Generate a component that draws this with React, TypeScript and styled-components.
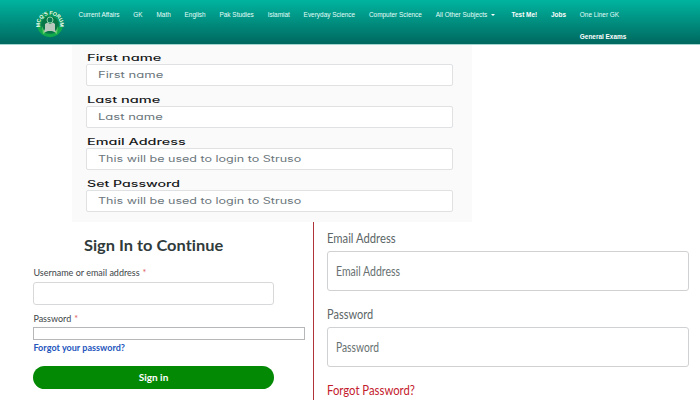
import React from "react";
import styled, { createGlobalStyle, css } from "styled-components";

const GlobalStyle = createGlobalStyle`
  *, *::before, *::after { box-sizing: border-box; }
  body { margin: 0; background: #fff; overflow: hidden; font-variant-ligatures: none; }
`;

const Page = styled.div`
  width: 700px;
  height: 400px;
  overflow: hidden;
  background: #fff;
`;

const Header = styled.header`
  display: flex;
  align-items: flex-start;
  height: 45px;
  padding-left: 35px;
  background: linear-gradient(#00b49f, #00685f);
  border-bottom: 1px solid #a5d5d1;
  font-family: "Liberation Sans", Arial, sans-serif;
`;

const Logo = styled.svg`
  width: 30px;
  height: 30px;
  margin-top: 9px;
  flex: none;
`;

const Nav = styled.nav`
  display: flex;
  margin: 10px 0 0 13.5px;
  gap: 13.8px;
`;

const NavLink = styled.a<{ $bold?: boolean }>`
  display: flex;
  align-items: center;
  height: 9px;
  color: #e6fffb;
  font-size: 6.45px;
  line-height: 9px;
  white-space: nowrap;
  ${(p) =>
    p.$bold &&
    css`
      color: #fff;
      font-weight: 700;
    `}
`;

const Caret = styled.span`
  margin: 1px 3px 0 3.5px;
  border: 2px solid transparent;
  border-top-color: #fff;
  border-bottom: 0;
`;

const NavStack = styled.div`
  display: flex;
  flex-direction: column;
  gap: 13px;
`;

const Stretch = styled.span<{ $x: number }>`
  display: inline-block;
  white-space: nowrap;
  transform: scaleX(${(p) => p.$x});
  transform-origin: 0 50%;
`;

const SignUp = styled.section`
  display: flex;
  flex-direction: column;
  width: 400px;
  height: 177px;
  margin-left: 71.5px;
  padding: 7.3px 19px 0 14.5px;
  background: #fafafa;
  font-family: Inter, sans-serif;
  font-feature-settings: "cv11";
`;

const WideGroup = styled.div`
  height: 41.75px;
`;

const WideLabel = styled.label`
  display: block;
  height: 12px;
  padding-left: 0.5px;
  color: #17191b;
  font-size: 8.7px;
  font-weight: 500;
  line-height: 13px;
`;

const WideInput = styled.div`
  display: flex;
  align-items: center;
  height: 22px;
  padding: 0 10.5px;
  background: #fff;
  border: 1px solid #dfe1e3;
  border-radius: 2px;
  color: #6b767c;
  font-size: 8.3px;
`;

const Lower = styled.main`
  display: flex;
  height: 178px;
  font-family: Lato, sans-serif;
`;

const SignIn = styled.section`
  display: flex;
  flex-direction: column;
  width: 313px;
  padding: 13px 8px 0 33.4px;
`;

const Title = styled.h1`
  margin: 0 0 12px 50.5px;
  height: 20px;
  color: #303b3b;
  font-size: 15px;
  font-weight: 700;
  line-height: 20px;
`;

const Label = styled.label<{ $gap: number }>`
  height: 12px;
  margin-bottom: ${(p) => p.$gap}px;
  color: #3c4548;
  font-size: 9px;
  line-height: 12px;
`;

const Required = styled.span`
  margin-left: 3px;
  color: #e0565b;
`;

const UserInput = styled.div`
  width: 240.3px;
  height: 23px;
  margin-bottom: 8.4px;
  border: 1px solid #d6d8da;
  border-radius: 3px;
`;

const PasswordInput = styled.div`
  width: 271.5px;
  height: 13px;
  margin-bottom: 2px;
  border: 1px solid #b5b7b8;
`;

const ForgotLink = styled.a`
  height: 12px;
  margin-bottom: 11.5px;
  color: #2455bd;
  font-size: 9px;
  font-weight: 700;
  letter-spacing: 0.04px;
  line-height: 12px;
`;

const Submit = styled.button`
  width: 240.3px;
  height: 23px;
  padding: 0;
  border: 0;
  border-radius: 12px;
  background: #048904;
  color: #fff;
  font: 700 10px/23px Lato, sans-serif;
`;

const LogIn = styled.section`
  display: flex;
  flex-direction: column;
  flex: 1;
  padding: 8px 11px 0 13px;
  border-left: 1px solid #b0323a;
`;

const TallLabel = styled.label`
  height: 18px;
  margin-bottom: 3px;
  color: #5c6667;
  font-size: 13px;
  line-height: 17px;
`;

const TallInput = styled.div`
  display: flex;
  align-items: center;
  height: 40px;
  margin-bottom: 14.5px;
  padding: 1px 7.5px 0;
  border: 1px solid #cfd1d2;
  border-radius: 3px;
  color: #687172;
  font-size: 12.5px;
`;

const RedLink = styled.a`
  color: #c4202c;
  font-size: 13px;
  line-height: 18px;
`;

const links = [
  "Current Affairs",
  "GK",
  "Math",
  "English",
  "Pak Studies",
  "Islamiat",
  "Everyday Science",
  "Computer Science",
];

const signUpFields = [
  { label: "First name", labelX: 1.69, hint: "First name", hintX: 1.57 },
  { label: "Last name", labelX: 1.68, hint: "Last name", hintX: 1.57 },
  { label: "Email Address", labelX: 1.66, hint: "This will be used to login to Struso", hintX: 1.51 },
  { label: "Set Password", labelX: 1.63, hint: "This will be used to login to Struso", hintX: 1.51 },
];

const logInFields = [
  { name: "Email Address", labelX: 0.865, hintX: 0.84 },
  { name: "Password", labelX: 0.845, hintX: 0.82 },
];

function ForumLogo() {
  return (
    <Logo viewBox="0 0 30 30">
      <defs>
        <path id="ring" d="M5.2 18.2 A10.1 10.1 0 1 1 24.8 18.2" />
      </defs>
      <circle cx="15" cy="15" r="13" fill="#08965a" />
      <path d="M2.3 18 A13 13 0 0 0 27.7 18 L23 17 A8 8 0 0 1 7 17Z" fill="#12a84c" />
      <circle cx="15" cy="16" r="8.8" fill="#087748" />
      <path d="M10 15 L12.5 13.5 L15 15 L18 13.5 L20 15 L20 21 L22 24 L17 22 L13 22 L8 24 L10 20Z" fill="#b9c9bd" />
      <path d="M7 17 L10 24 L8 25Z M23 17 L20 24 L22 25Z" fill="#63cf68" />
      <circle cx="15" cy="11" r="3" fill="#0b7952" stroke="#8bd0a4" strokeWidth="1" />
      <text fill="#f1fff5" fontFamily="Liberation Sans" fontSize="5.3" fontWeight="700">
        <textPath href="#ring" textLength="36">MCQ'S FORUM</textPath>
      </text>
    </Logo>
  );
}

export default function App() {
  return (
    <Page>
      <GlobalStyle />
      <Header>
        <ForumLogo />
        <Nav>
          {links.map((l) => (
            <NavLink key={l}>{l}</NavLink>
          ))}
          <NavLink>
            All Other Subjects
            <Caret />
          </NavLink>
          <NavLink $bold>Test Me!</NavLink>
          <NavLink $bold>Jobs</NavLink>
          <NavStack>
            <NavLink>One Liner GK</NavLink>
            <NavLink $bold>General Exams</NavLink>
          </NavStack>
        </Nav>
      </Header>
      <SignUp>
        {signUpFields.map((f) => (
          <WideGroup key={f.label}>
            <WideLabel>
              <Stretch $x={f.labelX}>{f.label}</Stretch>
            </WideLabel>
            <WideInput>
              <Stretch $x={f.hintX}>{f.hint}</Stretch>
            </WideInput>
          </WideGroup>
        ))}
      </SignUp>
      <Lower>
        <SignIn>
          <Title>
            <Stretch $x={1.093}>Sign In to Continue</Stretch>
          </Title>
          <Label $gap={3}>
            Username or email address<Required>*</Required>
          </Label>
          <UserInput />
          <Label $gap={2}>
            Password<Required>*</Required>
          </Label>
          <PasswordInput />
          <ForgotLink>Forgot your password?</ForgotLink>
          <Submit>Sign in</Submit>
        </SignIn>
        <LogIn>
          {logInFields.map((f) => (
            <React.Fragment key={f.name}>
              <TallLabel>
                <Stretch $x={f.labelX}>{f.name}</Stretch>
              </TallLabel>
              <TallInput>
                <Stretch $x={f.hintX}>{f.name}</Stretch>
              </TallInput>
            </React.Fragment>
          ))}
          <RedLink>
            <Stretch $x={0.87}>Forgot Password?</Stretch>
          </RedLink>
        </LogIn>
      </Lower>
    </Page>
  );
}
